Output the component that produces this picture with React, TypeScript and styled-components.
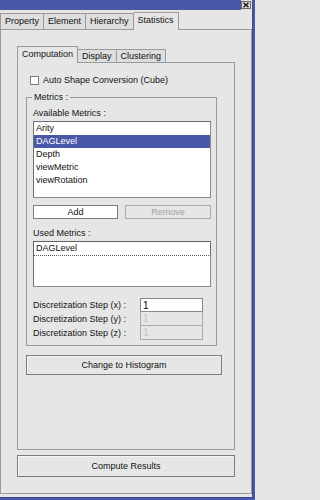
import React from 'react';
import styled, { createGlobalStyle } from 'styled-components';

const BLUE = '#4a58a8';
const FACE = '#e6e6e6';
const LINE = '#9a9a9a';

const GlobalStyle = createGlobalStyle`
  html, body {
    margin: 0;
    padding: 0;
    background: ${FACE};
  }
  body {
    font-family: "Liberation Sans", Arial, sans-serif;
    font-size: 9px;
    color: #111;
  }
  * {
    box-sizing: border-box;
  }
`;

const Window = styled.div`
  width: 255px;
  height: 500px;
  display: flex;
  flex-direction: column;
  overflow: hidden;
`;

const WindowRow = styled.div`
  flex: 1;
  display: flex;
  min-height: 0;
`;

const MainColumn = styled.div`
  width: 252px;
  display: flex;
  flex-direction: column;
`;

const RightEdge = styled.div`
  width: 3px;
  background: ${BLUE};
  border-left: 1px solid #3d4a90;
`;

const BottomEdge = styled.div`
  height: 3px;
  background: ${BLUE};
  border-top: 1px solid #3d4a90;
`;

const TitleRow = styled.div`
  height: 10px;
  display: flex;
`;

const TitleBar = styled.div`
  flex: 1;
  background: ${BLUE};
`;

const CloseButton = styled.div`
  width: 10px;
  height: 8px;
  margin: 1px 1px 0 0;
  display: flex;
`;

const TabBar = styled.div`
  height: 17px;
  margin-top: 2px;
  display: flex;
  align-items: flex-end;
`;

const Tab = styled.div<{ $active?: boolean; $first?: boolean; $inner?: boolean }>`
  position: relative;
  z-index: ${p => (p.$active ? 1 : 0)};
  height: ${p => (p.$active ? (p.$inner ? 17 : 18) : p.$inner ? 13 : 16)}px;
  margin-bottom: ${p => (p.$active ? -1 : 0)}px;
  padding: ${p => (p.$active ? 2 : 0)}px 4px 0;
  display: flex;
  align-items: ${p => (p.$active ? 'flex-start' : 'center')};
  border-top: 1px solid ${LINE};
  border-right: 1px solid ${LINE};
  border-left: ${p => (p.$first ? `1px solid ${LINE}` : 'none')};
  background: ${p => (p.$active ? FACE : '#dedede')};
  color: #111;
  white-space: nowrap;
  line-height: 11px;
`;

const Panel = styled.div`
  flex: 1;
  margin-bottom: 3px;
  border: 1px solid ${LINE};
  padding: 16px;
  display: flex;
  flex-direction: column;
`;

const InnerTabBar = styled.div`
  height: 16px;
  display: flex;
  align-items: flex-end;
`;

const InnerPanel = styled.div`
  flex: 1;
  border: 1px solid ${LINE};
  padding: 11px 0 0 8px;
  display: flex;
  flex-direction: column;
`;

const CheckRow = styled.div`
  height: 12px;
  margin-left: 4px;
  display: flex;
  align-items: center;
  gap: 4px;
`;

const CheckBox = styled.div`
  width: 9px;
  height: 9px;
  border: 1px solid #7c7c7c;
  background: #fff;
`;

const FieldSet = styled.fieldset`
  width: 191px;
  margin: 5px 0 0;
  padding: 5px 5px 5px 6px;
  border: 1px solid ${LINE};
  min-width: 0;
`;

const Legend = styled.legend`
  padding: 0 2px;
  margin-left: -1px;
  line-height: 12px;
`;

const Caption = styled.div<{ $gap?: number }>`
  height: 11px;
  line-height: 11px;
  margin-top: ${p => p.$gap ?? 0}px;
`;

const ListBox = styled.div<{ $height: number }>`
  height: ${p => p.$height}px;
  margin-top: 2px;
  border: 1px solid #8a8a8a;
  border-top-color: #707070;
  border-left-color: #707070;
  background: #fff;
  display: flex;
  flex-direction: column;
`;

const ListItem = styled.div<{ $selected?: boolean; $focused?: boolean }>`
  height: 13px;
  line-height: 13px;
  padding-left: 2px;
  background: ${p => (p.$selected ? BLUE : 'transparent')};
  color: ${p => (p.$selected ? '#fff' : '#111')};
  outline: ${p => (p.$focused ? '1px dotted #555' : 'none')};
  outline-offset: 0;
`;

const ButtonRow = styled.div`
  margin-top: 7px;
  display: grid;
  grid-template-columns: 85px 86px;
  justify-content: space-between;
`;

const Button = styled.div<{ $tone?: 'white' | 'disabled' | 'face'; $height?: number }>`
  height: ${p => p.$height ?? 14}px;
  display: flex;
  align-items: center;
  justify-content: center;
  border: 1px solid ${p => (p.$tone === 'disabled' ? '#ababab' : '#7c7c7c')};
  background: ${p => (p.$tone === 'white' ? '#fff' : FACE)};
  color: ${p => (p.$tone === 'disabled' ? '#a4a4a4' : '#111')};
  white-space: nowrap;
`;

const WideButton = styled(Button)<{ $width: number; $top: number }>`
  width: ${p => p.$width}px;
  margin-top: ${p => p.$top}px;
  box-shadow: inset 1px 1px 0 #f6f6f6;
`;

const StepGrid = styled.div`
  margin-top: 11px;
  display: grid;
  grid-template-columns: 107px 63px;
  grid-auto-rows: 14px;
`;

const StepLabel = styled.div`
  display: flex;
  align-items: center;
  white-space: nowrap;
`;

const StepInput = styled.div<{ $disabled?: boolean }>`
  border: 1px solid ${p => (p.$disabled ? '#ababab' : '#8a8a8a')};
  border-top-width: ${p => (p.$disabled ? 0 : 1)}px;
  background: ${p => (p.$disabled ? FACE : '#fff')};
  color: ${p => (p.$disabled ? '#c4c4c4' : '#000')};
  padding-left: 2px;
  display: flex;
  align-items: center;
  font-size: 10px;
`;

const outerTabs = ['Property', 'Element', 'Hierarchy', 'Statistics'];
const innerTabs = ['Computation', 'Display', 'Clustering'];
const available = ['Arity', 'DAGLevel', 'Depth', 'viewMetric', 'viewRotation'];
const steps = ['x', 'y', 'z'];

export default function App() {
  return (
    <>
      <GlobalStyle />
      <Window>
        <WindowRow>
          <MainColumn>
            <TitleRow>
              <TitleBar />
              <CloseButton>
                <svg width="10" height="8" viewBox="0 0 10 8">
                  <rect x="0.5" y="0.5" width="9" height="7" fill="#dcdcdc" stroke="#6a6a6a" />
                  <path d="M2.5 1.8 L7.5 6.2 M7.5 1.8 L2.5 6.2" stroke="#111" strokeWidth="1.4" />
                </svg>
              </CloseButton>
            </TitleRow>

            <TabBar>
              {outerTabs.map((t, i) => (
                <Tab key={t} $first={i === 0} $active={t === 'Statistics'}>
                  {t}
                </Tab>
              ))}
            </TabBar>

            <Panel>
              <InnerTabBar>
                {innerTabs.map((t, i) => (
                  <Tab key={t} $inner $first={i === 0} $active={i === 0}>
                    {t}
                  </Tab>
                ))}
              </InnerTabBar>

              <InnerPanel>
                <CheckRow>
                  <CheckBox />
                  <span>Auto Shape Conversion (Cube)</span>
                </CheckRow>

                <FieldSet>
                  <Legend>Metrics :</Legend>
                  <Caption>Available Metrics :</Caption>
                  <ListBox $height={77}>
                    {available.map(m => (
                      <ListItem key={m} $selected={m === 'DAGLevel'}>
                        {m}
                      </ListItem>
                    ))}
                  </ListBox>

                  <ButtonRow>
                    <Button $tone="white">Add</Button>
                    <Button $tone="disabled">Remove</Button>
                  </ButtonRow>

                  <Caption $gap={9}>Used Metrics :</Caption>
                  <ListBox $height={46}>
                    <ListItem $focused>DAGLevel</ListItem>
                  </ListBox>

                  <StepGrid>
                    {steps.map((s, i) => (
                      <React.Fragment key={s}>
                        <StepLabel>Discretization Step ({s}) :</StepLabel>
                        <StepInput $disabled={i > 0}>1</StepInput>
                      </React.Fragment>
                    ))}
                  </StepGrid>
                </FieldSet>

                <WideButton $tone="face" $width={196} $top={9} $height={20}>
                  Change to Histogram
                </WideButton>
              </InnerPanel>

              <WideButton $tone="face" $width={218} $top={5} $height={22}>
                Compute Results
              </WideButton>
            </Panel>
          </MainColumn>
          <RightEdge />
        </WindowRow>
        <BottomEdge />
      </Window>
    </>
  );
}
